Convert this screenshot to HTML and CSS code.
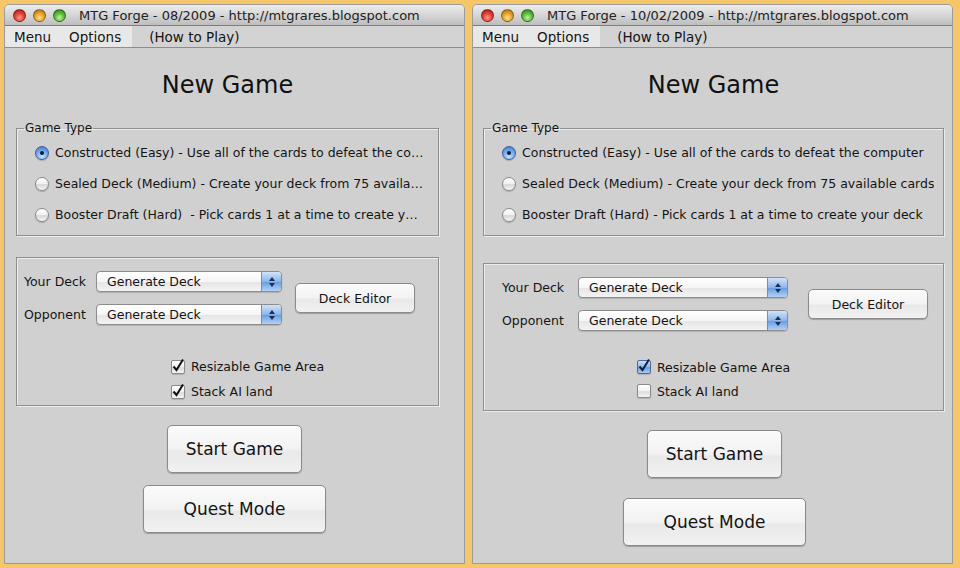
FILE: index.html
```html
<!DOCTYPE html>
<html lang="en">
<head>
    <meta charset="UTF-8">
    <title>MTG Forge - New Game</title>
    <link rel="stylesheet" href="styles.css">
</head>
<body>
    <div class="desktop">
        <!-- old build -->
        <div class="window window-old">
            <div class="titlebar">
                <span class="light light-close"></span>
                <span class="light light-min"></span>
                <span class="light light-zoom"></span>
                <span class="title">MTG Forge - 08/2009 - http://mtgrares.blogspot.com</span>
            </div>
            <div class="menubar">
                <div class="menus"><span>Menu</span><span>Options</span></div>
                <span class="help">(How to Play)</span>
            </div>
            <div class="content">
                <h1>New Game</h1>
                <fieldset class="game-type">
                    <legend>Game Type</legend>
                    <div class="radio-row"><span class="radio selected"></span><span class="radio-text">Constructed (Easy) - Use all of the cards to defeat the computer</span></div>
                    <div class="radio-row"><span class="radio"></span><span class="radio-text">Sealed Deck (Medium) - Create your deck from 75 available cards</span></div>
                    <div class="radio-row"><span class="radio"></span><span class="radio-text">Booster Draft (Hard)  - Pick cards 1 at a time to create your deck</span></div>
                </fieldset>
                <div class="deck-panel">
                    <div class="deck-row">
                        <div class="deck-selects">
                            <div class="select-row">
                                <span class="select-label">Your Deck</span>
                                <div class="combo"><span class="combo-text">Generate Deck</span><span class="combo-arrows"><svg width="8" height="12" viewBox="0 0 8 12"><polygon points="4,1 7,5 1,5" fill="#1d2f55"/><polygon points="1,7 7,7 4,11" fill="#1d2f55"/></svg></span></div>
                            </div>
                            <div class="select-row">
                                <span class="select-label">Opponent</span>
                                <div class="combo"><span class="combo-text">Generate Deck</span><span class="combo-arrows"><svg width="8" height="12" viewBox="0 0 8 12"><polygon points="4,1 7,5 1,5" fill="#1d2f55"/><polygon points="1,7 7,7 4,11" fill="#1d2f55"/></svg></span></div>
                            </div>
                        </div>
                        <button class="btn btn-editor">Deck Editor</button>
                    </div>
                    <div class="checks">
                        <div class="check-row"><span class="check"><svg width="16" height="16" viewBox="0 0 16 16"><path d="M3.5 8.5 L6.5 12 L13 1.5" fill="none" stroke="#111" stroke-width="2"/></svg></span>Resizable Game Area</div>
                        <div class="check-row"><span class="check"><svg width="16" height="16" viewBox="0 0 16 16"><path d="M3.5 8.5 L6.5 12 L13 1.5" fill="none" stroke="#111" stroke-width="2"/></svg></span>Stack AI land</div>
                    </div>
                </div>
            </div>
            <div class="actions">
                <button class="btn btn-start">Start Game</button>
                <button class="btn btn-quest">Quest Mode</button>
            </div>
        </div>

        <!-- new build -->
        <div class="window window-new">
            <div class="titlebar">
                <span class="light light-close"></span>
                <span class="light light-min"></span>
                <span class="light light-zoom"></span>
                <span class="title">MTG Forge - 10/02/2009 - http://mtgrares.blogspot.com</span>
            </div>
            <div class="menubar">
                <div class="menus"><span>Menu</span><span>Options</span></div>
                <span class="help">(How to Play)</span>
            </div>
            <div class="content">
                <h1>New Game</h1>
                <fieldset class="game-type">
                    <legend>Game Type</legend>
                    <div class="radio-row"><span class="radio selected"></span><span class="radio-text">Constructed (Easy) - Use all of the cards to defeat the computer</span></div>
                    <div class="radio-row"><span class="radio"></span><span class="radio-text">Sealed Deck (Medium) - Create your deck from 75 available cards</span></div>
                    <div class="radio-row"><span class="radio"></span><span class="radio-text">Booster Draft (Hard) - Pick cards 1 at a time to create your deck</span></div>
                </fieldset>
                <div class="deck-panel">
                    <div class="deck-row">
                        <div class="deck-selects">
                            <div class="select-row">
                                <span class="select-label">Your Deck</span>
                                <div class="combo"><span class="combo-text">Generate Deck</span><span class="combo-arrows"><svg width="8" height="12" viewBox="0 0 8 12"><polygon points="4,1 7,5 1,5" fill="#1d2f55"/><polygon points="1,7 7,7 4,11" fill="#1d2f55"/></svg></span></div>
                            </div>
                            <div class="select-row">
                                <span class="select-label">Opponent</span>
                                <div class="combo"><span class="combo-text">Generate Deck</span><span class="combo-arrows"><svg width="8" height="12" viewBox="0 0 8 12"><polygon points="4,1 7,5 1,5" fill="#1d2f55"/><polygon points="1,7 7,7 4,11" fill="#1d2f55"/></svg></span></div>
                            </div>
                        </div>
                        <button class="btn btn-editor">Deck Editor</button>
                    </div>
                    <div class="checks">
                        <div class="check-row"><span class="check check-blue"><svg width="16" height="16" viewBox="0 0 16 16"><path d="M3.5 8.5 L6.5 12 L13 1.5" fill="none" stroke="#14213d" stroke-width="2"/></svg></span>Resizable Game Area</div>
                        <div class="check-row"><span class="check"></span>Stack AI land</div>
                    </div>
                </div>
            </div>
            <div class="actions">
                <button class="btn btn-start">Start Game</button>
                <button class="btn btn-quest">Quest Mode</button>
            </div>
        </div>
    </div>
</body>
</html>
```

FILE: styles.css
```css
* {
    margin: 0;
    padding: 0;
    box-sizing: border-box;
}

body {
    background: #f6c66b;
    font-family: 'DejaVu Sans', Verdana, sans-serif;
    color: #141414;
    width: 960px;
    height: 568px;
    overflow: hidden;
}

.desktop {
    display: flex;
    gap: 7px;
    padding: 4px 0 0 4px;
}

.window {
    height: 560px;
    background: #d0d0d0;
    border: 1px solid #9b9b9b;
    border-radius: 5px 5px 0 0;
    overflow: hidden;
}

.window-old { width: 461px; }
.window-new { width: 481px; }

/* title bar */
.titlebar {
    height: 21px;
    display: flex;
    align-items: center;
    padding-left: 8px;
    background: linear-gradient(#ececec, #d6d6d6 50%, #bdbdbd);
    border-bottom: 1px solid #7e7e7e;
}

.light {
    width: 13px;
    height: 13px;
    border-radius: 50%;
    margin-right: 7px;
    border: 1px solid rgba(0, 0, 0, 0.35);
}

.light-close {
    background: radial-gradient(circle at 50% 70%, #ff9a8a 0%, #e2453b 45%, #a5140e 100%);
}

.light-min {
    background: radial-gradient(circle at 50% 70%, #ffe39a 0%, #e8a52a 45%, #a8650a 100%);
}

.light-zoom {
    background: radial-gradient(circle at 50% 70%, #c4f5a5 0%, #5fbf3e 45%, #2a7a12 100%);
}

.title {
    margin-left: 6px;
    font-size: 13px;
    color: #222;
    white-space: nowrap;
}

/* menu bar */
.menubar {
    height: 22px;
    display: flex;
    align-items: center;
    background: #d3d3d3;
    border-bottom: 1px solid #8d8d8d;
    font-size: 13.5px;
}

.menus {
    display: flex;
    height: 100%;
    align-items: center;
    background: #e8e8e8;
    padding-right: 2px;
}

.menus span {
    padding: 0 9px;
}

.help {
    padding-left: 17px;
}

/* main content */
.window-old .content { padding: 0 25px 0 11px; }
.window-new .content { padding: 0 8px 0 10px; }

h1 {
    margin-top: 23px;
    font-size: 24px;
    line-height: 28px;
    font-weight: normal;
    text-align: center;
    color: #111;
}

.game-type {
    margin-top: 22px;
    border: 1px solid #8f8f8f;
    box-shadow: 1px 1px 0 #ececec, inset 1px 1px 0 #ececec;
    padding: 2px 13px 5px 18px;
    min-width: 0;
}

.window-new .game-type { padding-right: 6px; }

.game-type legend {
    font-size: 12px;
    line-height: 14px;
    margin-left: -11px;
    padding: 0 1px;
}

.radio-row {
    height: 31px;
    display: flex;
    align-items: center;
    font-size: 12.5px;
}

.radio {
    flex: none;
    width: 14px;
    height: 14px;
    margin-right: 6px;
    border-radius: 50%;
    border: 1px solid #8a8a8a;
    background: linear-gradient(#ffffff, #f0f0f0 50%, #d6d6d6 55%, #f6f6f6);
    box-shadow: 0 1px 1px rgba(0, 0, 0, 0.2);
    position: relative;
}

.radio.selected {
    border-color: #3e5f93;
    background: radial-gradient(circle at 50% 80%, #c6e0ff 0%, #6fa6ea 55%, #3c70c4 100%);
}

.radio.selected::after {
    content: '';
    position: absolute;
    left: 4px;
    top: 4px;
    width: 4px;
    height: 4px;
    border-radius: 50%;
    background: #0d1a33;
}

.radio-text {
    white-space: pre;
    overflow: hidden;
    text-overflow: ellipsis;
}

/* deck panel */
.deck-panel {
    border: 1px solid #8f8f8f;
    box-shadow: 1px 1px 0 #ececec, inset 1px 1px 0 #ececec;
}

.window-old .deck-panel { margin-top: 21px; padding: 13px 0 1px 7px; }
.window-new .deck-panel { margin-top: 27px; padding: 13px 0 7px 18px; }

.deck-row {
    display: flex;
    align-items: center;
}

.window-old .deck-row { gap: 13px; }
.window-new .deck-row { gap: 20px; }

.deck-selects {
    display: flex;
    flex-direction: column;
    gap: 12px;
}

.select-row {
    display: flex;
    align-items: center;
    height: 21px;
    font-size: 12.5px;
}

.window-old .select-label { width: 72px; }
.window-new .select-label { width: 76px; }

.combo {
    display: flex;
    height: 21px;
    border: 1px solid #8c8c8c;
    border-radius: 4px;
    background: linear-gradient(#ffffff, #f6f6f6 50%, #e6e6e6 55%, #f3f3f3);
    box-shadow: 0 1px 1px rgba(0, 0, 0, 0.15);
    overflow: hidden;
}

.window-old .combo { width: 186px; }
.window-new .combo { width: 210px; }

.combo-text {
    flex: 1;
    padding-left: 10px;
    line-height: 19px;
}

.combo-arrows {
    width: 20px;
    display: flex;
    align-items: center;
    justify-content: center;
    border-left: 1px solid #6d8fc0;
    background: linear-gradient(#d2e3f8, #8ab6ec 50%, #6a9fe3 55%, #b4d1f4);
}

.btn {
    font-family: 'DejaVu Sans', Verdana, sans-serif;
    color: #141414;
    border: 1px solid #8a8a8a;
    border-radius: 5px;
    background: linear-gradient(#fbfbfb, #f2f2f2 50%, #e9e9e9 55%, #f1f1f1);
    box-shadow: 0 1px 1px rgba(0, 0, 0, 0.25);
}

.btn-editor {
    width: 120px;
    height: 30px;
    font-size: 12.5px;
}

.checks {
    display: flex;
    flex-direction: column;
}

.window-old .checks { margin-top: 29px; padding-left: 147px; }
.window-new .checks { margin-top: 24px; padding-left: 135px; }

.check-row {
    height: 25px;
    display: flex;
    align-items: center;
    font-size: 12.5px;
}

.window-new .check-row { height: 24px; }

.check {
    width: 14px;
    height: 14px;
    margin-right: 6px;
    border: 1px solid #8a8a8a;
    border-radius: 2px;
    background: linear-gradient(#ffffff, #f2f2f2 50%, #dcdcdc 55%, #f4f4f4);
    box-shadow: 0 1px 1px rgba(0, 0, 0, 0.15);
    display: flex;
    align-items: flex-end;
    justify-content: center;
    overflow: visible;
}

.check svg {
    flex: none;
    margin-bottom: -1px;
}

.check-blue {
    border-color: #4b6a9c;
    background: linear-gradient(#cde0f8, #8fb8ec 50%, #6a9fe3 55%, #a9cbf3);
}

/* bottom buttons */
.actions {
    display: flex;
    flex-direction: column;
    align-items: center;
}

.window-old .actions { margin-top: 19px; gap: 12px; }
.window-new .actions { margin-top: 19px; gap: 20px; padding-left: 4px; }

.btn-start {
    width: 135px;
    height: 48px;
    font-size: 17px;
}

.btn-quest {
    width: 183px;
    height: 48px;
    font-size: 17px;
}
```
